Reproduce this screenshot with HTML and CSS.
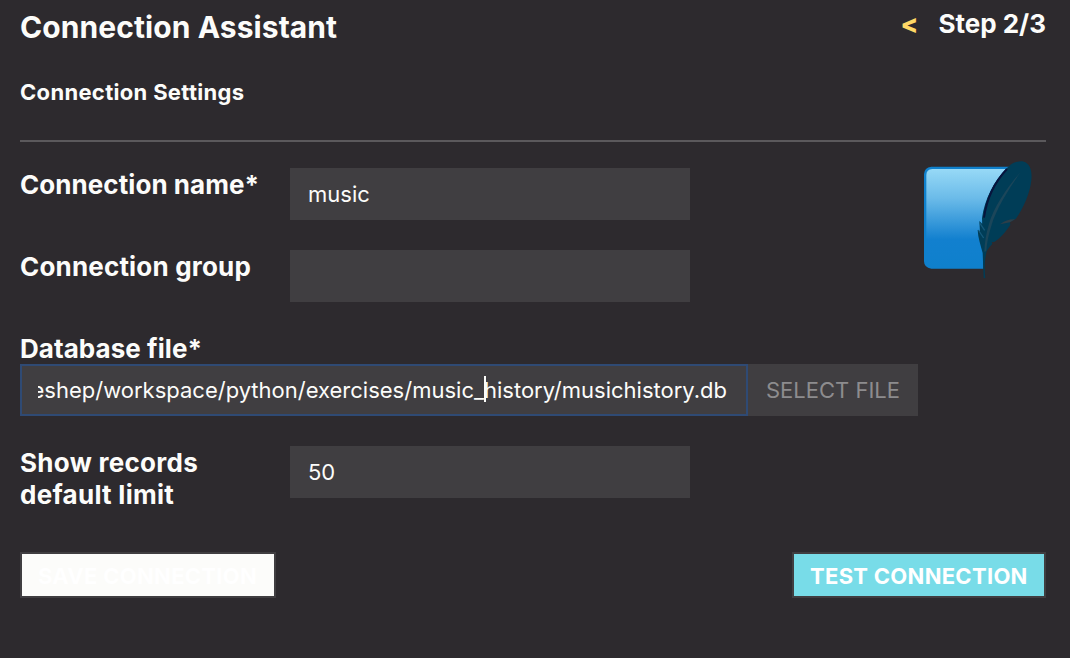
FILE: index.html
```html
<!DOCTYPE html>
<html lang="en">
<head>
<meta charset="utf-8">
<title>Connection Assistant</title>
<link rel="stylesheet" href="styles.css">
</head>
<body>
<main class="assistant">
  <header class="header">
    <h1 class="title">Connection Assistant</h1>
    <div class="step"><span class="back">&lt;</span><span class="step-label">Step 2/3</span></div>
  </header>
  <h2 class="subtitle">Connection Settings</h2>
  <div class="body">
    <div class="form">
      <div class="row"><div class="label">Connection name*</div><div class="field"><span class="music">music</span></div></div>
      <div class="row"><div class="label group-label">Connection group</div><div class="field"></div></div>
      <div class="file-block">
        <div class="label file-label">Database file*</div>
        <div class="file-row">
          <div class="file-input"><div class="clip"><span class="path">eshep/workspace/python/exercises/music_<span class="caret"></span>history/musichistory.db</span></div></div>
          <div class="select"><span class="select-text">SELECT FILE</span></div>
        </div>
      </div>
      <div class="row"><div class="label limit-label">Show records<br>default limit</div><div class="field"><span class="num">50</span></div></div>
    </div>
    <svg class="logo" viewBox="66 30 342 360" width="114" height="120">
      <defs>
        <linearGradient id="paper" x1="0" y1="0" x2="0" y2="1">
          <stop offset="0" stop-color="#97d9f6"/><stop offset=".3" stop-color="#6bbbe9"/><stop offset=".72" stop-color="#1280cf"/><stop offset="1" stop-color="#0f80cc"/>
        </linearGradient>
      </defs>
      <path d="M94 50H330C292 88 262 135 249 205C246 240 246 270 250 300V356H94Q72 353 72 334V72Q73 53 94 50Z" fill="#0f80cc"/>
      <path d="M97 57H318C280 96 256 146 247 205C242 240 244 270 247 300V350H97Q79 348 79 332V75Q79 59 97 57Z" fill="url(#paper)"/>
      <path d="M324 51C338 37 356 31 372 35C390 41 397 62 394 90C391 127 371 174 347 207L330 216L331 225C317 246 300 265 284 275L275 277L277 282C269 291 264 296 260 304C255 324 252 348 256 385L251 384L248 309C242 285 234 265 233 240L240 246L238 213L247 222L246 205C253 150 282 90 324 51Z" fill="#003d57"/>
      <path d="M321 57C286 94 260 145 252 203" fill="none" stroke="#07143d" stroke-width="6"/>
      <path d="M362 66C318 116 280 174 267 222C258 252 254 279 253 305L259 304C260 280 266 252 275 224C288 180 322 122 362 66Z" fill="#1b465a"/>
      <path d="M300 223Q321 207 345 208L330 217Z" fill="#2d3f49"/>
      <path d="M240 220L254 241M235 240L251 264" stroke="#14597a" stroke-width="4"/>
    </svg>
  </div>
  <footer class="actions">
    <div class="button save"><span class="save-text">SAVE CONNECTION</span></div>
    <div class="button test"><span class="test-text">TEST CONNECTION</span></div>
  </footer>
</main>
</body>
</html>
```
FILE: styles.css
```css
* { box-sizing: border-box; }
body { margin: 0; background: #2d2a2e; color: #fcfcfa; font: 22px/26px Inter, sans-serif; }
.assistant { height: 658px; padding: 8px 24px 0 20px; overflow: hidden; white-space: nowrap; }
.header { display: flex; justify-content: space-between; height: 70px; }
.title { margin: 0; font-size: 30px; line-height: 38px; font-weight: 700; letter-spacing: .08px; }
.step { display: flex; gap: 20px; font-size: 26px; line-height: 31px; font-weight: 700; }
.back { color: #ffd866; font-size: 26px; line-height: 31px; font-weight: 800; }
.subtitle { margin: 0; height: 64px; border-bottom: 2px solid #5b595c; font-size: 22px; line-height: 28px; font-weight: 700; letter-spacing: .32px; }
.body { display: flex; justify-content: space-between; padding-top: 18px; }
.form { display: flex; flex-direction: column; width: 898px; padding-top: 8px; }
.row { display: flex; height: 52px; margin-bottom: 30px; }
.label { width: 270px; height: 32px; font-size: 26px; line-height: 32px; padding-top: 1px; font-weight: 700; letter-spacing: .06px; }
.group-label { letter-spacing: .18px; }
.limit-label { height: auto; letter-spacing: .28px; }
.field { width: 400px; height: 52px; padding: 0 18px; background: #403e41; line-height: 52px; }
.file-block { height: 84px; margin-bottom: 30px; }
.file-row { display: flex; height: 52px; }
.file-input { width: 728px; padding: 0 16px; background: #403e41; border: 2px solid #2f4a74; }
.clip { display: flex; justify-content: flex-end; width: 692px; padding-right: 3px; overflow: hidden; line-height: 48px; }
.caret { display: inline-block; position: relative; width: 0; }
.caret::before { content: ""; position: absolute; left: 0; top: -22px; width: 2px; height: 26px; background: #fcfcfa; }
.select { width: 170px; padding-left: 18px; background: #403e41; color: #8d8c8e; line-height: 52px; }
.logo { flex: none; margin-right: 10px; filter: blur(.5px); }
.actions { display: flex; justify-content: space-between; margin-top: 24px; }
.button { height: 46px; padding-left: 16px; border: 2px solid #403e41; font-weight: 700; line-height: 44px; letter-spacing: .29px; }
.save { width: 256px; background: #fcfcfa; color: #fff; }
.test { width: 254px; background: #78dce8; color: #fff; }
```
